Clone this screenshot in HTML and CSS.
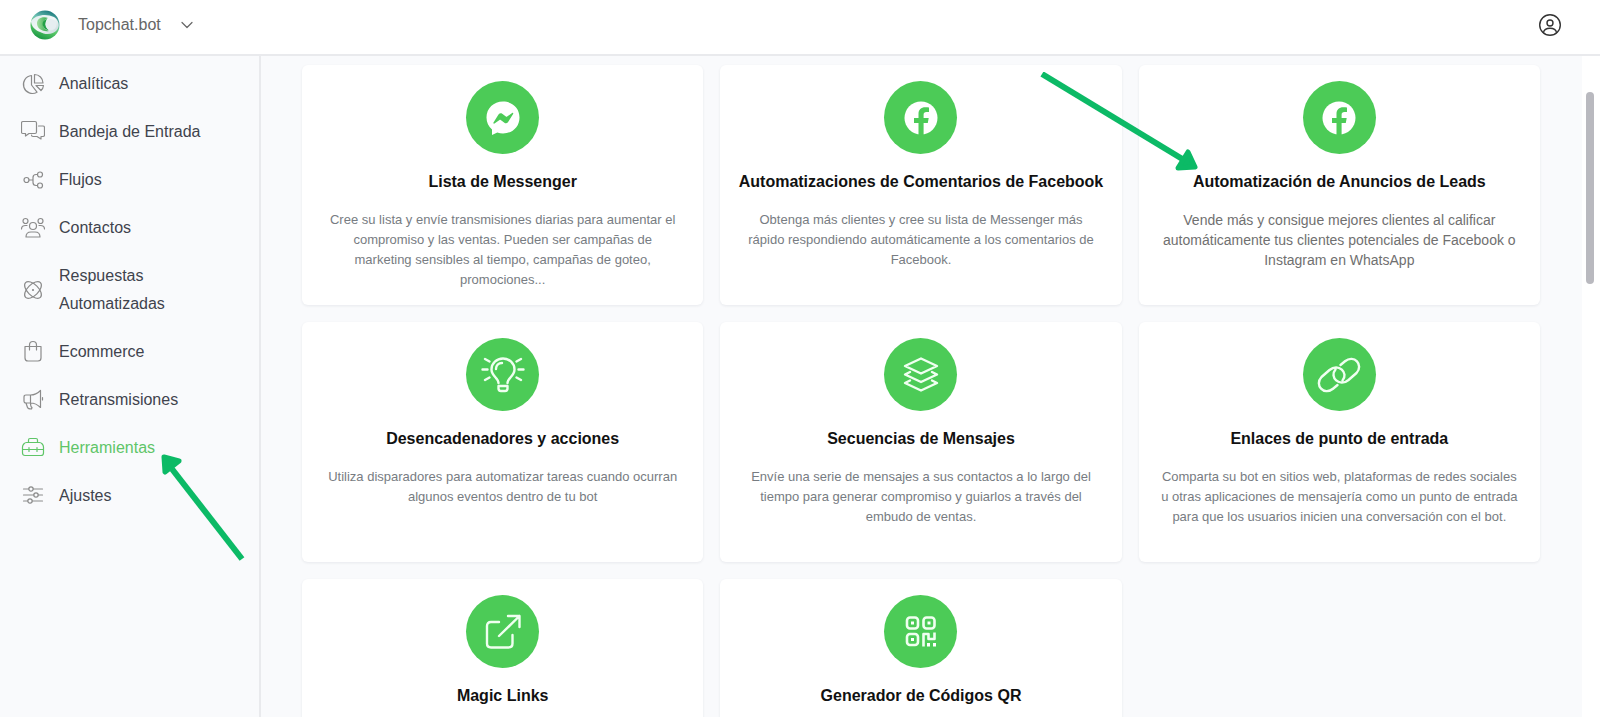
FILE: index.html
```html
<!DOCTYPE html>
<html lang="es">
<head>
<meta charset="utf-8">
<title>Topchat.bot – Herramientas</title>
<link rel="stylesheet" href="styles.css">
</head>
<body>
<header class="topbar">
  <svg class="logo" viewBox="0 0 30 30" aria-hidden="true">
    <defs>
      <linearGradient id="ball" x1="0.7" y1="0" x2="0.3" y2="1"><stop offset="0" stop-color="#17757a"/><stop offset=".35" stop-color="#6fc2b4"/><stop offset=".6" stop-color="#5cc96a"/><stop offset="1" stop-color="#159440"/></linearGradient>
      <linearGradient id="swirl" x1="0" y1="0" x2="1" y2="1"><stop offset="0" stop-color="#dcebed"/><stop offset=".5" stop-color="#f4f8f8"/><stop offset="1" stop-color="#c3d5d9"/></linearGradient>
      <linearGradient id="leaf" x1="0" y1="0" x2="1" y2="0"><stop offset="0" stop-color="#9fdc9c"/><stop offset="1" stop-color="#2aa548"/></linearGradient>
    </defs>
    <circle cx="15" cy="15" r="14.500" fill="url(#ball)"/>
    <path d="M1 11C5 5 16 3 24 7c5 3 6 9 3 13-4 5-12 5-17 2C5 20 1 16 1 11Z" fill="url(#swirl)"/>
    <path d="M18 8C12 6 6.500 9 7 14c.5 5 6 8 12 7-4-1-6-3.500-6-6.500 0-3 2-5.500 5-6.500Z" fill="url(#leaf)"/>
    <path d="M17 9c-4 1-5.500 4.500-3.500 8 1 2 3 3 5 3-3-3-4-7-1.500-11Z" fill="#23a048"/>
    <ellipse cx="21" cy="14.500" rx="5.500" ry="5.500" fill="#e6eef1"/>
  </svg>
  <button class="workspace" type="button">Topchat.bot
    <svg class="chevron" viewBox="0 0 12 12" aria-hidden="true"><path d="M1 3.500l5 5 5-5"/></svg>
  </button>
  <button class="account" type="button" aria-label="Cuenta">
    <svg viewBox="0 0 24 24" aria-hidden="true"><circle cx="12" cy="12" r="10.300"/><circle cx="12" cy="10" r="3"/><path d="M5.500 19.500c.5-3 3-4.200 6.500-4.200s6 1.200 6.500 4.200"/></svg>
  </button>
</header>

<div class="shell">
  <nav class="sidebar">
    <a class="item" href="#"><svg class="icon" viewBox="0 0 24 24" aria-hidden="true"><path d="M10.500 3.500a9 9 0 1 0 5.500 16.700l-5.500-7.200ZM13.500 2.500V11h8.500a8.500 8.500 0 0 0-8.500-8.500ZM15 13.500h7.500c-.2 2-1 3.700-2.500 5Z"/></svg><span>Analíticas</span></a>
    <a class="item" href="#"><svg class="icon" viewBox="0 0 24 24" aria-hidden="true"><path d="M2 1.500h12c1 0 1.500.5 1.500 1.500v9c0 1-.5 1.500-1.500 1.500H8L4.500 16v-2.500H2c-1 0-1.500-.5-1.500-1.500V3c0-1 .5-1.500 1.500-1.500ZM17.500 6H22c1 0 1.500.5 1.500 1.500V15c0 1-.5 1.500-1.500 1.500h-2V19l-4-2.500h-4c-1 0-1.500-.5-1.500-1.500"/></svg><span>Bandeja de Entrada</span></a>
    <a class="item" href="#"><svg class="icon" viewBox="0 0 24 24" aria-hidden="true"><circle cx="5.500" cy="12" r="2.500"/><circle cx="19" cy="6.500" r="2.500"/><circle cx="19" cy="17.500" r="2.500"/><path d="M8 12h4M16.500 6.500H15c-2 0-3 1-3 3v5c0 2 1 3 3 3h1.500"/></svg><span>Flujos</span></a>
    <a class="item" href="#"><svg class="icon" viewBox="0 0 24 24" aria-hidden="true"><circle cx="12" cy="10" r="3.500"/><circle cx="4.500" cy="5" r="2.500"/><circle cx="19.500" cy="5" r="2.500"/><path d="M5 21c0-3.500 2-5 5-5h4c3 0 5 1.500 5 5ZM.5 13c0-2.500 1-3.500 4-3.500h1.500M23.500 13c0-2.500-1-3.500-4-3.500H18"/></svg><span>Contactos</span></a>
    <a class="item" href="#"><svg class="icon" viewBox="0 0 24 24" aria-hidden="true"><ellipse cx="12" cy="12" rx="10.500" ry="5.500" transform="rotate(45 12 12)"/><ellipse cx="12" cy="12" rx="10.500" ry="5.500" transform="rotate(-45 12 12)"/><circle cx="12" cy="12" r=".5"/></svg><span>Respuestas Automatizadas</span></a>
    <a class="item" href="#"><svg class="icon" viewBox="0 0 24 24" aria-hidden="true"><path d="M4 6.500h16V18c0 2-1 3-3 3H7c-2 0-3-1-3-3ZM8.500 10V5c0-2.500 1.500-3.500 3.500-3.500s3.500 1 3.500 3.500v5"/></svg><span>Ecommerce</span></a>
    <a class="item" href="#"><svg class="icon" viewBox="0 0 24 24" aria-hidden="true"><path d="M9.500 7C13.500 7 17 5 19.500 2.500v17C17 17 13.500 15 9.500 15H5c-1.300 0-2-.7-2-2V9c0-1.300.7-2 2-2ZM9.500 7v8M5 15l1.500 4.500c.5 1.300 1.500 1.500 4 1.500l.5-1.500c-1-.5-1.500-2.500-1.500-4.500M21.500 9.500v2.500"/></svg><span>Retransmisiones</span></a>
    <a class="item active" href="#" aria-current="page"><svg class="icon" viewBox="0 0 24 24" aria-hidden="true"><path d="M5.500 6.500h13c2 0 4 2.500 4 4.500v6c0 1.700-1 2.500-2.500 2.500H4c-1.500 0-2.500-.8-2.500-2.500v-6c0-2 2-4.500 4-4.500ZM7.500 6V4c0-1 .5-1.500 1.500-1.500h6c1 0 1.500.5 1.500 1.500v2M2 13.500h5m2 0h6m2 0h5M8 11.500v4M16 11.500v4"/></svg><span>Herramientas</span></a>
    <a class="item" href="#"><svg class="icon" viewBox="0 0 24 24" aria-hidden="true"><circle cx="10" cy="5" r="2.200"/><circle cx="15" cy="11" r="2.200"/><circle cx="9" cy="17" r="2.200"/><path d="M2.500 5h5.300M12.200 5H21.500M2.500 11h10.300M17.200 11H21.500M2.500 17h4.300M11.200 17H21.500"/></svg><span>Ajustes</span></a>
  </nav>

  <main class="content">
    <section class="grid">
      <article class="card">
        <div class="badge"><svg viewBox="0 0 48 48" aria-hidden="true"><path class="solid" d="M24 7.500C14.500 7.500 7.500 14.300 7.500 23.500c0 5 2 9 5.500 12v5.500l5.300-2.500c1.700.6 3.700.9 5.700.9 9.500 0 16.500-6.800 16.500-16S33.500 7.500 24 7.500Z"/><path class="cut" d="M14.500 28.500l5-8c1-1.300 2.500-1.500 3.700-.7l3.700 2.800c.4.3.8.3 1.200 0l5-3.600c.8-.5 1.600.3 1 1l-5 8c-.9 1.300-2.500 1.600-3.700.7l-3.700-2.800c-.4-.3-.8-.3-1.200 0l-5 3.600c-.7.500-1.500-.3-1-1Z"/></svg></div>
        <h2>Lista de Messenger</h2>
        <p>Cree su lista y envíe transmisiones diarias para aumentar el compromiso y las ventas. Pueden ser campañas de marketing sensibles al tiempo, campañas de goteo, promociones...</p>
      </article>
      <article class="card">
        <div class="badge"><svg viewBox="0 0 48 48" aria-hidden="true"><circle class="solid" cx="24" cy="24" r="16.500"/><path class="cut" d="M21.500 41V29H17v-5h4.500v-4c0-4.500 2.700-6.800 6.700-6.800 1.500 0 2.800.1 3.800.4V18h-2.500c-2 0-2.900 1-2.900 2.700V24h5.100l-.9 5h-4.200v12Z"/></svg></div>
        <h2>Automatizaciones de Comentarios de Facebook</h2>
        <p>Obtenga más clientes y cree su lista de Messenger más rápido respondiendo automáticamente a los comentarios de Facebook.</p>
      </article>
      <article class="card">
        <div class="badge"><svg viewBox="0 0 48 48" aria-hidden="true"><circle class="solid" cx="24" cy="24" r="16.500"/><path class="cut" d="M21.500 41V29H17v-5h4.500v-4c0-4.500 2.700-6.800 6.700-6.800 1.500 0 2.800.1 3.800.4V18h-2.500c-2 0-2.900 1-2.900 2.700V24h5.100l-.9 5h-4.200v12Z"/></svg></div>
        <h2>Automatización de Anuncios de Leads</h2>
        <p class="large">Vende más y consigue mejores clientes al calificar automáticamente tus clientes potenciales de Facebook o Instagram en WhatsApp</p>
      </article>
      <article class="card">
        <div class="badge"><svg viewBox="0 0 48 48" aria-hidden="true"><path d="M19.500 32c0-5-7-7-7-13.500a11.500 11 0 0 1 23 0c0 6.500-7 8.500-7 13.500M19.500 35h9v2.500c0 1.500-1 2.500-2.500 2.500h-4c-1.500 0-2.500-1-2.500-2.500ZM17 18c0-3.500 2.500-6 6-6M3.500 18.500h5M39.500 18.500h5M6 8l4.500 2.500M42 8l-4.500 2.500M6 29l4.500-2.500M42 29l-4.500-2.500"/></svg></div>
        <h2>Desencadenadores y acciones</h2>
        <p>Utiliza disparadores para automatizar tareas cuando ocurran algunos eventos dentro de tu bot</p>
      </article>
      <article class="card">
        <div class="badge"><svg viewBox="0 0 48 48" aria-hidden="true"><path d="M24 7.500l16 7.500L24 22.500 8 15ZM13 21l-5 2.500L24 31l16-7.500-5-2.500M13 29.500L8 32l16 7.500L40 32l-5-2.500"/></svg></div>
        <h2>Secuencias de Mensajes</h2>
        <p>Envíe una serie de mensajes a sus contactos a lo largo del tiempo para generar compromiso y guiarlos a través del embudo de ventas.</p>
      </article>
      <article class="card">
        <div class="badge"><svg viewBox="0 0 48 48" aria-hidden="true"><path d="M25.500 14l4.500-3.700C39 3 49 14 41.500 22l-8 7C24.500 36.500 14 26 20.500 18.500M22.500 34l-4.500 3.700C9 45-1 34 6.500 26l8-7C23.500 11.500 34 22 27.500 29.500"/></svg></div>
        <h2>Enlaces de punto de entrada</h2>
        <p>Comparta su bot en sitios web, plataformas de redes sociales u otras aplicaciones de mensajería como un punto de entrada para que los usuarios inicien una conversación con el bot.</p>
      </article>
      <article class="card">
        <div class="badge"><svg viewBox="0 0 48 48" aria-hidden="true"><path d="M20 14h-8c-2.700 0-4 1.300-4 4v17.500c0 2.700 1.300 4 4 4h17.500c2.700 0 4-1.300 4-4V27M20 28L40.500 8M29 8h11.500v11"/></svg></div>
        <h2>Magic Links</h2>
      </article>
      <article class="card">
        <div class="badge"><svg viewBox="0 0 48 48" aria-hidden="true"><g class="qr"><rect x="10" y="9.500" width="11" height="11" rx="3"/><rect x="26.500" y="9.500" width="11" height="11" rx="3"/><rect x="10" y="26" width="11" height="11" rx="3"/><path d="M26.500 38.500V26h5v5h6v-6.500"/></g><path class="solid" d="M14 13.500h3v3h-3zM30.500 13.500h3v3h-3zM14 30h3v3h-3zM30 35h3v3.500h-3zM36 35h3v3.500h-3z"/></svg></div>
        <h2>Generador de Códigos QR</h2>
      </article>
    </section>
  </main>
  <div class="track"><div class="thumb"></div></div>
</div>

<svg class="arrow arrow-card" viewBox="0 0 160 102" aria-hidden="true"><path class="shaft" d="M2 2l142 86"/><path class="head" d="M148 80l7 15-17 1Z"/></svg>
<svg class="arrow arrow-menu" viewBox="0 0 86 110" aria-hidden="true"><path class="shaft" d="M82 107L12 17"/><path class="head" d="M4 5l15 4L5 20Z"/></svg>
</body>
</html>
```
FILE: styles.css
```css
* { box-sizing: border-box; }

body {
  margin: 0;
  height: 100vh;
  display: flex;
  flex-direction: column;
  overflow: hidden;
  position: relative;
  background: #f9fafc;
  color: #3f434d;
  font: 16px/28px "Liberation Sans", Arial, sans-serif;
}

svg { fill: none; stroke: currentColor; stroke-linecap: round; stroke-linejoin: round; }

button { border: 0; padding: 0; background: none; font: inherit; color: inherit; }

.topbar {
  flex: none;
  display: flex;
  align-items: center;
  height: 56px;
  padding: 0 38px 4px 30px;
  background: #fff;
  border-bottom: 2px solid #e9eaed;
}
.logo { width: 30px; height: 30px; stroke: none; }
.workspace { display: flex; align-items: center; gap: 20px; margin-left: 18px; color: #666; }
.chevron { width: 12px; height: 12px; stroke-width: 1.2; }
.account { margin-left: auto; width: 24px; height: 24px; color: #333; }
.account svg { display: block; stroke-width: 1.4; }

.shell { flex: 1; display: flex; min-height: 0; }

.sidebar {
  flex: none;
  width: 261px;
  padding: 4px 40px 0 21px;
  border-right: 2px solid #e9eaed;
}
.item {
  display: flex;
  align-items: center;
  gap: 14px;
  padding: 10px 0;
  color: inherit;
  text-decoration: none;
}
.icon { flex: none; width: 24px; height: 24px; color: #8b8b8b; stroke-width: 1.2; }
.active, .active .icon { color: #5fc568; }

.content { flex: 1; min-width: 0; overflow: hidden; padding: 9px 42px 0 41px; }
.grid {
  display: grid;
  grid-template-columns: repeat(3, 1fr);
  grid-auto-rows: minmax(240px, auto);
  gap: 17px;
}
.card {
  display: flex;
  flex-direction: column;
  align-items: center;
  padding: 16px 16px 12px;
  border-radius: 6px;
  background: #fff;
  box-shadow: 0 1px 3px rgba(30, 40, 60, .08);
  text-align: center;
}
.badge {
  display: grid;
  place-items: center;
  width: 73px;
  height: 73px;
  border-radius: 50%;
  background: #4ccb57;
  color: #effff0;
}
.badge svg { width: 48px; height: 48px; stroke-width: 2.4; }
.badge .solid { fill: #fff; stroke: none; }
.badge .cut { fill: #4ccb57; stroke: none; }
.badge .qr { stroke-width: 2.6; stroke-linecap: butt; }
.card h2 { margin: 16px 0; font-size: 16px; line-height: 24px; color: #111; }
.card p { margin: 0; padding: 0 6px; font-size: 13px; line-height: 20px; color: #777c82; }
.card .large { font-size: 14px; color: #707070; }

.track { flex: none; width: 18px; padding: 36px 6px 0 4px; background: #fff; }
.thumb { height: 192px; border-radius: 4px; background: #b9b9bf; }

.arrow { position: absolute; color: #0cba66; pointer-events: none; }
.arrow-card { left: 1040px; top: 72px; width: 160px; height: 102px; }
.arrow-menu { left: 160px; top: 452px; width: 86px; height: 110px; }
.arrow .shaft { stroke-width: 6; stroke-linecap: butt; }
.arrow .head { fill: currentColor; stroke-width: 5; }
```
